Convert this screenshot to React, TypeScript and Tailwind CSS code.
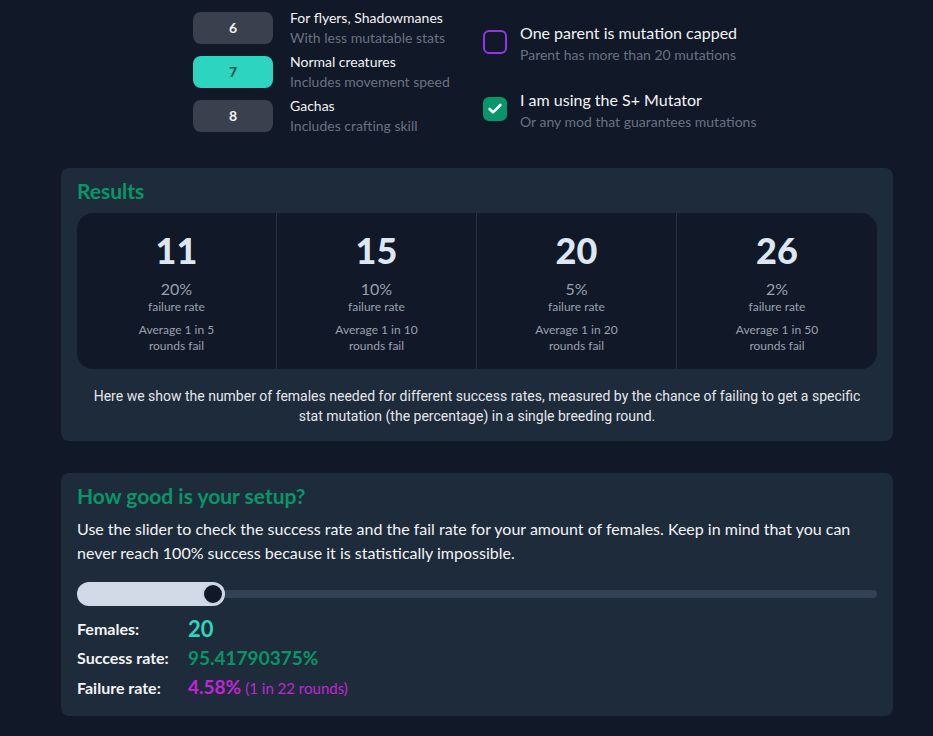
import React, { useState } from 'react';
import { Check } from 'lucide-react';

const gens = [
    { n: 6, title: 'For flyers, Shadowmanes', sub: 'With less mutatable stats' },
    { n: 7, title: 'Normal creatures', sub: 'Includes movement speed' },
    { n: 8, title: 'Gachas', sub: 'Includes crafting skill' },
];

const results = [
    { females: 11, pct: '20%', avg: 'Average 1 in 5' },
    { females: 15, pct: '10%', avg: 'Average 1 in 10' },
    { females: 20, pct: '5%', avg: 'Average 1 in 20' },
    { females: 26, pct: '2%', avg: 'Average 1 in 50' },
];

const App: React.FC = () => {
    const [selected, setSelected] = useState(7);
    const [capped, setCapped] = useState(false);
    const [mutator, setMutator] = useState(true);
    const females = 20;

    return (
        <div
            className="min-h-screen bg-[#111827] text-gray-100 pl-[61px] pr-[40px] pt-[8px] pb-[21px]"
            style={{ fontFamily: 'Lato, "Open Sans", sans-serif' }}
        >
            {/* Options */}
            <div className="flex pl-[132px]">
                <div className="flex flex-col gap-1 w-[290px]">
                    {gens.map((g) => (
                        <div key={g.n} className="flex items-start h-10">
                            <button
                                onClick={() => setSelected(g.n)}
                                className={`mt-1 w-[80px] h-[32px] rounded-lg text-sm font-bold ${
                                    selected === g.n ? 'bg-[#2dd4bf] text-[#134e4a]' : 'bg-[#3a404d] text-gray-100'
                                }`}
                            >
                                {g.n}
                            </button>
                            <div className="ml-[17px] leading-5">
                                <div className="text-sm text-gray-100">{g.title}</div>
                                <div className="text-sm text-gray-500">{g.sub}</div>
                            </div>
                        </div>
                    ))}
                </div>
                <div className="flex flex-col gap-[32px] pt-[22px]">
                    <label className="flex items-start cursor-pointer" onClick={() => setCapped(!capped)}>
                        <span
                            className={`shrink-0 w-6 h-6 rounded-md border-2 flex items-center justify-center ${
                                capped ? 'bg-[#079669] border-[#079669]' : 'border-[#9333ea]'
                            }`}
                        >
                            {capped && <Check className="w-4 h-4 text-white" strokeWidth={4} />}
                        </span>
                        <div className="ml-[13px] -mt-[9px]">
                            <div className="text-base leading-6 text-gray-100">One parent is mutation capped</div>
                            <div className="text-sm leading-5 text-gray-500">Parent has more than 20 mutations</div>
                        </div>
                    </label>
                    <label className="flex items-start cursor-pointer" onClick={() => setMutator(!mutator)}>
                        <span
                            className={`shrink-0 w-6 h-6 rounded-md border-2 flex items-center justify-center ${
                                mutator ? 'bg-[#079669] border-[#079669]' : 'border-[#9333ea]'
                            }`}
                        >
                            {mutator && <Check className="w-4 h-4 text-white" strokeWidth={4} />}
                        </span>
                        <div className="ml-[13px] -mt-[9px]">
                            <div className="text-base leading-6 text-gray-100">I am using the S+ Mutator</div>
                            <div className="text-sm leading-5 text-gray-500">Or any mod that guarantees mutations</div>
                        </div>
                    </label>
                </div>
            </div>

            {/* Results */}
            <section className="mt-[32px] bg-[#1e2b3b] rounded-lg px-4 pt-[9px] pb-[15px]">
                <h2 className="text-[21px] font-bold text-[#079669] leading-7">Results</h2>
                <div className="mt-[8px] bg-[#111827] rounded-2xl grid grid-cols-4 divide-x divide-[#273244]">
                    {results.map((r) => (
                        <div key={r.females} className="flex flex-col items-center pt-[15px] pb-[15px] text-center">
                            <div className="text-[36px] leading-[44px] font-black text-[#dde6f3]">{r.females}</div>
                            <div className="mt-[7px] text-base leading-5 text-gray-400">{r.pct}</div>
                            <div className="text-xs leading-4 text-gray-400">failure rate</div>
                            <div className="mt-[7px] text-xs leading-4 text-gray-400">
                                {r.avg}
                                <br />
                                rounds fail
                            </div>
                        </div>
                    ))}
                </div>
                <p
                    className="mt-[17px] text-center text-[14px] leading-5 text-gray-200 px-4"
                    style={{ fontFamily: 'Roboto, "Liberation Sans", sans-serif' }}
                >
                    Here we show the number of females needed for different success rates, measured by the chance of failing to get a specific stat mutation (the percentage) in a single breeding round.
                </p>
            </section>

            {/* Setup */}
            <section className="mt-[32px] bg-[#1e2b3b] rounded-lg px-4 pt-[9px] pb-[13px]">
                <h2 className="text-[21px] font-bold text-[#079669] leading-7">How good is your setup?</h2>
                <p className="mt-[7px] text-base leading-6 text-gray-100">
                    Use the slider to check the success rate and the fail rate for your amount of females. Keep in mind that you can never reach 100% success because it is statistically impossible.
                </p>
                <div className="mt-[17px] relative h-[24px] flex items-center">
                    <div className="absolute left-0 right-0 h-[8px] rounded-full bg-[#334155]" />
                    <div className="absolute left-0 w-[148px] h-[24px] rounded-full bg-[#d1dae6]" />
                    <div className="absolute left-[125px] w-[22px] h-[22px] rounded-full bg-[#111827] border-2 border-[#cbd5e1]" />
                </div>
                <div className="mt-2 grid grid-cols-[111px_1fr] items-center">
                    <div className="text-base leading-[29px] font-bold text-gray-100">Females:</div>
                    <div className="text-[22px] leading-[29px] font-bold text-[#2dd4bf]">{females}</div>
                    <div className="text-base leading-[29px] font-bold text-gray-100">Success rate:</div>
                    <div className="text-[19px] leading-[29px] font-bold text-[#079669]">95.41790375%</div>
                    <div className="text-base leading-[29px] font-bold text-gray-100">Failure rate:</div>
                    <div className="leading-[29px] text-[#c026d3]">
                        <span className="text-[19px] font-bold">4.58%</span>{' '}
                        <span className="text-[15px]">(1 in 22 rounds)</span>
                    </div>
                </div>
            </section>
        </div>
    );
};

export default App;
